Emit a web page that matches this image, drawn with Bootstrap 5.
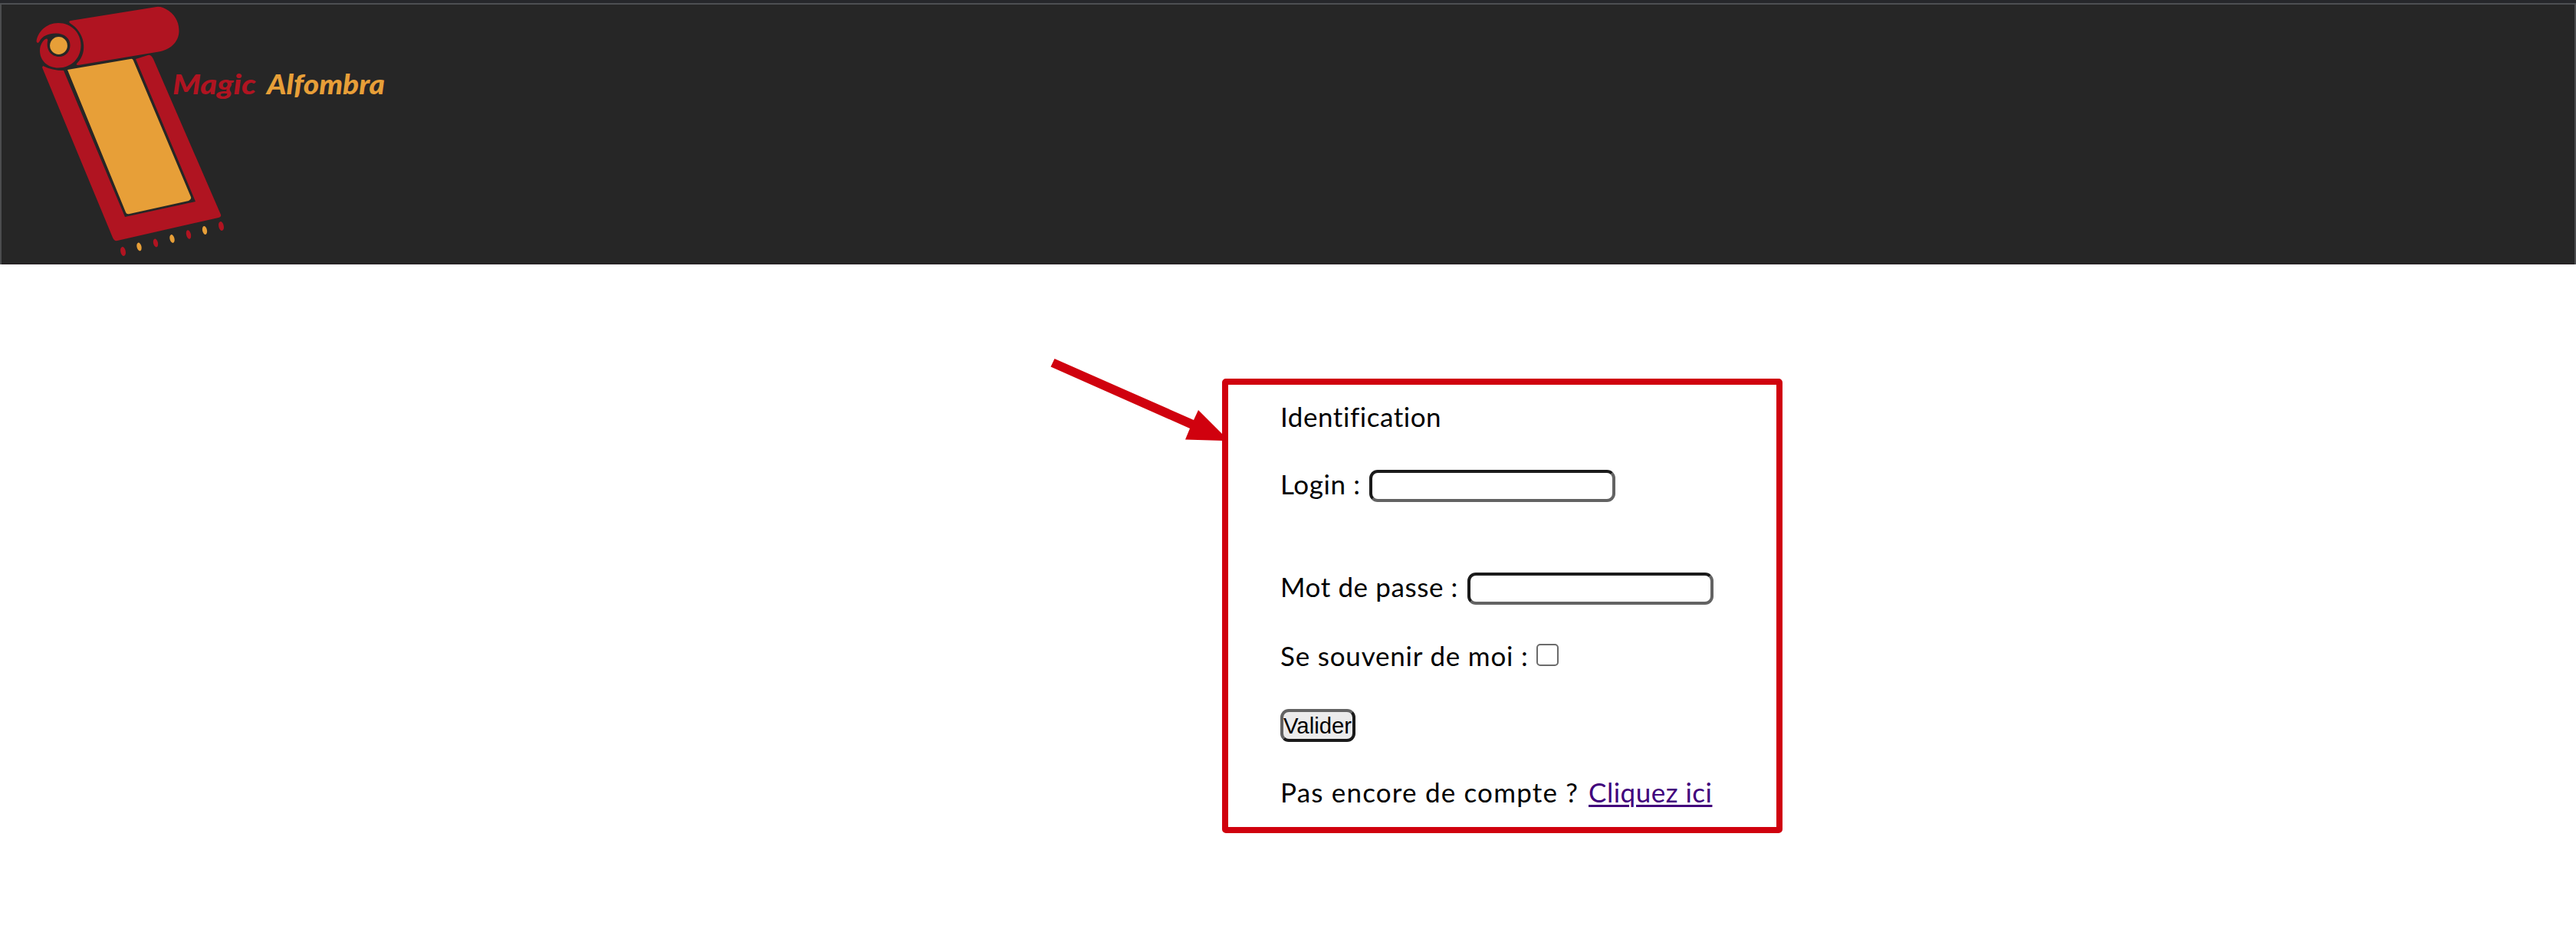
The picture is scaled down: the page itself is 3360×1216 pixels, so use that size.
<!DOCTYPE html>
<html lang="fr">
<head>
<meta charset="utf-8">
<title>Magic Alfombra</title>
<link rel="stylesheet" href="https://cdn.jsdelivr.net/npm/bootstrap@5.3.0/dist/css/bootstrap.min.css">
<style>
body{background:#fff;color:#000;font-family:Lato,"Open Sans",sans-serif;font-size:35px;line-height:44px;height:1216px;overflow:hidden;font-variant-ligatures:none}
.site-header{height:345px;background:#262626;border:solid #4b4c4e;border-width:0 2px;box-shadow:inset 0 -1px #231c20}
.top-strip{height:6px;background:#26272b;border-bottom:2px solid #4d4f52;margin:0 -2px}
.logo{display:block;margin:-6px 0 0 -2px}
.login-box{width:731px;height:593px;margin:149px 0 0 1594px;border:8px solid #d0010e;border-radius:5px;padding:19px 0 0 68px}
.line{height:44px;white-space:nowrap;display:flex;align-items:flex-start}
.fit{flex:none;white-space:pre}
.title-line{letter-spacing:.55px}
.login-line{margin-top:44px}
.login-line .fit{width:116px;letter-spacing:.6px}
.pass-line{margin-top:90px}
.pass-line .fit{width:244px;letter-spacing:.6px}
.keep-line{margin-top:46px}
.keep-line .fit{width:334px;letter-spacing:.8px}
.send-line{margin-top:46px}
.join-line{margin-top:44px}
.join-line .fit{width:402px;letter-spacing:1.2px}
.field{width:321px;height:42px;border:4px solid;border-color:#1a1a1a #636363 #636363 #1a1a1a;border-radius:11px;padding:0 6px;background:#fff;flex:none;margin-top:4px}
.check{appearance:none;width:29px;height:29px;border:2px solid #6b6b6b;border-radius:5px;background:#fff;margin:7px 0 0;flex:none}
.send{width:98px;height:43px;border:4px solid;border-color:#636363 #1a1a1a #1a1a1a #636363;border-radius:11px;background:#ebebeb;font:29.3px/35px "Liberation Sans",sans-serif;padding:0;color:#000;white-space:nowrap;margin-top:2px;text-align:left}
.visited{color:#41007c;letter-spacing:.5px;text-decoration:underline;text-decoration-thickness:3px;text-underline-offset:3px}
.visited:hover{color:#41007c}
.arrow{left:1360px;top:455px}
</style>
<script src="https://cdn.jsdelivr.net/npm/bootstrap@5.3.0/dist/js/bootstrap.bundle.min.js"></script>
</head>
<body class="position-relative">
<header class="site-header">
<div class="top-strip"></div>
<svg class="logo" width="540" height="339" viewBox="0 0 540 339" role="img" aria-label="Magic Alfombra">
<g fill="#b01421">
<path d="M92 27 L204 9 Q211 8 220 14 C231 22 233.500 32 233.500 41 C233 55 222 65 207 67.500 L102 85 Q98 85 101 82 C115 68 111 42 91 30 Q89 28 92 27 Z"/>
<path d="M47.500 54 C49 42 60 30 76 30 C93 30 105.500 43 105.500 59 C105.500 76 93 88.500 76 88.500 C62 88.500 52 79 52 66 C52 59 56 52 60.500 50.500 Q63 50.500 62 54 C60 65 67 74 77 74 C86 74 91.500 67 91.500 59 C91.500 50 84 43.500 73 43.500 C63 43.500 55 47 51.500 54 Q49 58 47.500 54 Z"/>
<path d="M56 86 Q68 92 83 92 L163 283 L255 263 L177 77 L193 72 Q197 71 200 77 L288 280 Q289 283 285 284 L153 314 Q149 315 147 310 L55 88 Z"/>
</g>
<circle cx="76.500" cy="59.500" r="11.400" fill="#e79f38"/>
<path d="M88 91 L170 77 Q173 76 174 79 L249 257 Q250 260 246 262 L169 279 Q165 280 164 277 Z" fill="#e79f38"/>
<g fill="#b01421"><ellipse cx="160.500" cy="328" rx="3.300" ry="6" transform="rotate(-12 160.500 328)"/><ellipse cx="203" cy="317" rx="3" ry="5.500" transform="rotate(-14 203 317)"/><ellipse cx="246" cy="306" rx="3" ry="5.800" transform="rotate(-14 246 306)"/><ellipse cx="288.500" cy="295" rx="3.300" ry="6" transform="rotate(-12 288.500 295)"/></g>
<g fill="#e79f38"><ellipse cx="181.500" cy="322" rx="3" ry="5.500" transform="rotate(-14 181.500 322)"/><ellipse cx="224.500" cy="311.500" rx="3" ry="5.500" transform="rotate(-14 224.500 311.500)"/><ellipse cx="267" cy="300.500" rx="3" ry="5.500" transform="rotate(-12 267 300.500)"/></g>
<g font-family="Lato, sans-serif" font-weight="900" font-style="italic" font-size="36"><text x="225" y="122.500" textLength="109" lengthAdjust="spacingAndGlyphs" fill="#b01421">Magic</text><text x="348" y="123" textLength="154" lengthAdjust="spacingAndGlyphs" fill="#e79f38">Alfombra</text></g>
</svg>
</header>
<main>
<form class="login-box">
<div class="line title-line"><span class="fit">Identification</span></div>
<div class="line login-line"><span class="fit">Login :</span><input class="field" aria-label="Login"></div>
<div class="line pass-line"><span class="fit">Mot de passe :</span><input type="password" class="field" aria-label="Mot de passe"></div>
<div class="line keep-line"><span class="fit">Se souvenir de moi :</span><input type="checkbox" class="check" aria-label="Se souvenir de moi"></div>
<div class="line send-line"><button type="button" class="send">Valider</button></div>
<div class="line join-line"><span class="fit">Pas encore de compte ?</span><a class="visited" href="#">Cliquez ici</a></div>
</form>
</main>
<svg class="arrow position-absolute" width="240" height="125" aria-hidden="true"><path d="M15.500 13 L197 93 L203 80 L240 117 L236 120 L186 118.500 L192 104 L10.500 23.500 Z" fill="#d0010e"/></svg>
</body>
</html>
